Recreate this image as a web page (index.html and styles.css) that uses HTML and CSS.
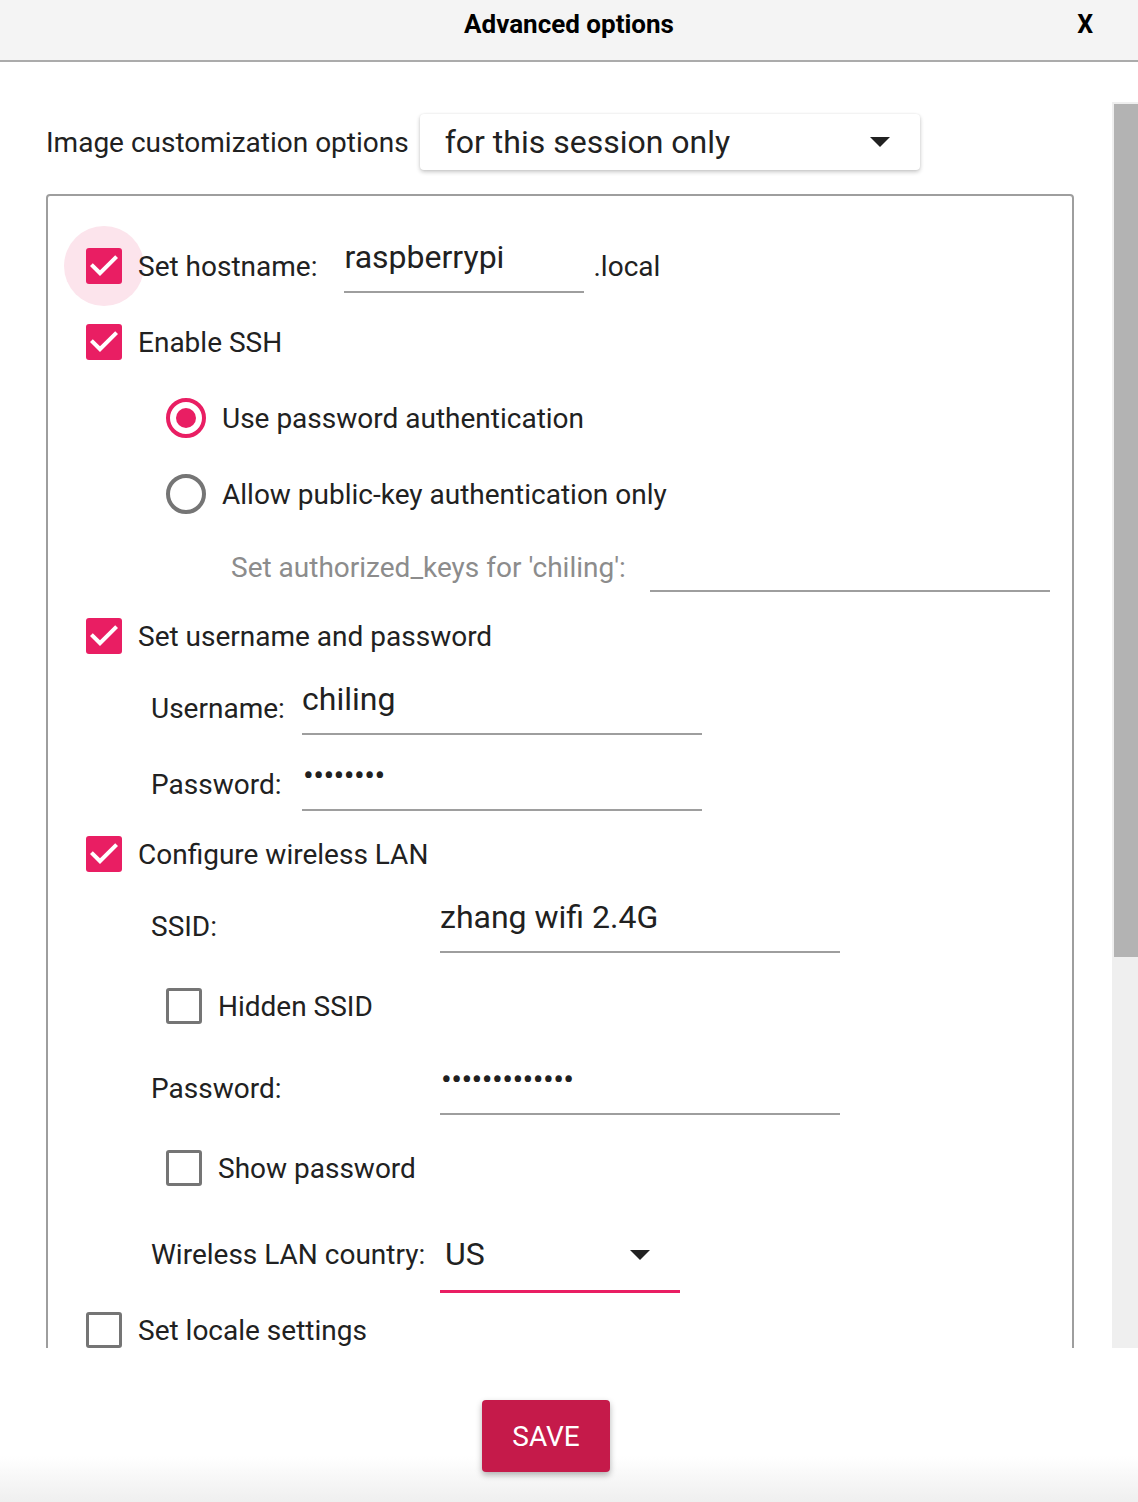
FILE: index.html
```html
<!DOCTYPE html>
<html lang="en">
<head>
<meta charset="utf-8">
<title>Advanced options</title>
<link rel="stylesheet" href="styles.css">
</head>
<body>
<header class="titlebar">
  <div class="spacer"></div>
  <h1 class="title">Advanced options</h1>
  <div class="close">X</div>
</header>

<div class="scroll-area">
  <main class="content">
    <div class="scope-row">
      <span class="label">Image customization options</span>
      <div class="select-box">
        <span class="select-text">for this session only</span>
        <span class="arrow"></span>
      </div>
    </div>

    <section class="group">
      <div class="row h76">
        <span class="halo">
          <span class="cb checked"><svg viewBox="0 0 36 36"><polygon points="14,28 4,18 6.8,15.2 14,22.3 29.2,7.2 32,10"/></svg></span>
        </span>
        <span class="label cb-label">Set hostname:</span>
        <div class="field w240 host">raspberrypi</div>
        <span class="label suffix">.local</span>
      </div>

      <div class="row h76">
        <span class="cb checked"><svg viewBox="0 0 36 36"><polygon points="14,28 4,18 6.8,15.2 14,22.3 29.2,7.2 32,10"/></svg></span>
        <span class="label cb-label">Enable SSH</span>
      </div>

      <div class="row h76 indent-radio">
        <span class="radio on"></span>
        <span class="label cb-label">Use password authentication</span>
      </div>

      <div class="row h76 indent-radio">
        <span class="radio"></span>
        <span class="label cb-label">Allow public-key authentication only</span>
      </div>

      <div class="row h70 indent-keys">
        <span class="label muted">Set authorized_keys for 'chiling':</span>
        <div class="field w400 keys"></div>
      </div>

      <div class="row h68">
        <span class="cb checked"><svg viewBox="0 0 36 36"><polygon points="14,28 4,18 6.8,15.2 14,22.3 29.2,7.2 32,10"/></svg></span>
        <span class="label cb-label">Set username and password</span>
      </div>

      <div class="row h76 indent-label">
        <span class="label col-user">Username:</span>
        <div class="field w400">chiling</div>
      </div>

      <div class="row h76 indent-label">
        <span class="label col-user">Password:</span>
        <div class="field w400 dots">••••••••</div>
      </div>

      <div class="row h64">
        <span class="cb checked"><svg viewBox="0 0 36 36"><polygon points="14,28 4,18 6.8,15.2 14,22.3 29.2,7.2 32,10"/></svg></span>
        <span class="label cb-label">Configure wireless LAN</span>
      </div>

      <div class="row h80 indent-label">
        <span class="label col-wifi">SSID:</span>
        <div class="field w400">zhang wifi 2.4G</div>
      </div>

      <div class="row h80 indent-radio">
        <span class="cb"></span>
        <span class="label cb-label">Hidden SSID</span>
      </div>

      <div class="row h84 indent-label">
        <span class="label col-wifi">Password:</span>
        <div class="field w400 dots">•••••••••••••</div>
      </div>

      <div class="row h76 indent-radio">
        <span class="cb"></span>
        <span class="label cb-label">Show password</span>
      </div>

      <div class="row h96 indent-label">
        <span class="label col-wifi">Wireless LAN country:</span>
        <div class="field w240 country">
          <span class="country-text">US</span>
          <span class="arrow"></span>
        </div>
      </div>

      <div class="row h56">
        <span class="cb"></span>
        <span class="label cb-label">Set locale settings</span>
      </div>
    </section>
  </main>

  <div class="scrollbar">
    <div class="track"><div class="thumb"></div></div>
  </div>
</div>

<footer class="actions">
  <button class="save" type="button">SAVE</button>
</footer>
</body>
</html>
```

FILE: styles.css
```css
* { box-sizing: border-box; }

html, body {
  margin: 0;
  padding: 0;
  background: #ffffff;
}

body {
  width: 1138px;
  height: 1502px;
  overflow: hidden;
  font-family: Roboto, "Liberation Sans", sans-serif;
  color: #212121;
}

/* ---------- title bar ---------- */
.titlebar {
  height: 62px;
  background: #f4f4f4;
  border-bottom: 2px solid #ababab;
  display: grid;
  grid-template-columns: 1fr auto 1fr;
  align-items: start;
  padding: 10px 45px 0 45px;
}

.title {
  margin: 0;
  font-size: 26px;
  font-weight: 700;
  line-height: 29px;
  color: #000;
}

.close {
  justify-self: end;
  font-size: 25px;
  font-weight: 700;
  line-height: 29px;
  color: #000;
}

/* ---------- scroll area ---------- */
.scroll-area {
  display: flex;
  height: 1286px;
}

.content {
  flex: 1;
  overflow: hidden;
  padding: 52px 38px 0 46px;
}

.scrollbar {
  width: 26px;
  padding-top: 40px;
  display: flex;
}

.track {
  flex: 1;
  background: #efefef;
  padding: 2px 0 0 2px;
}

.thumb {
  height: 853px;
  background: #b3b3b3;
}

/* ---------- text ---------- */
.label {
  font-size: 28px;
  line-height: 33px;
  white-space: nowrap;
}

.muted {
  color: #8c8c8c;
}

/* ---------- top selector ---------- */
.scope-row {
  display: flex;
  align-items: center;
  height: 56px;
  gap: 11px;
}

.select-box {
  width: 500px;
  height: 56px;
  background: #fff;
  border-radius: 4px;
  box-shadow: 0 2px 4px rgba(0, 0, 0, 0.22), 0 0 2px rgba(0, 0, 0, 0.08);
  display: flex;
  align-items: center;
  padding: 0 30px 0 25px;
}

.select-text {
  font-size: 32px;
  line-height: 36px;
}

.arrow {
  margin-left: auto;
  width: 0;
  height: 0;
  border-left: 10px solid transparent;
  border-right: 10px solid transparent;
  border-top: 10px solid #212121;
}

/* ---------- group box ---------- */
.group {
  margin-top: 24px;
  border: 2px solid #9e9e9e;
  border-radius: 4px;
  padding: 32px 0 80px 38px;
}

.row {
  display: flex;
  align-items: center;
}

.h56 { height: 56px; }
.h64 { height: 64px; }
.h68 { height: 68px; }
.h70 { height: 70px; }
.h76 { height: 76px; }
.h80 { height: 80px; }
.h84 { height: 84px; }
.h96 { height: 96px; }

.indent-radio { padding-left: 80px; }
.indent-label { padding-left: 65px; }
.indent-keys { padding-left: 145px; }

.cb-label { margin-left: 16px; }

.col-user { width: 151px; }
.col-wifi { width: 289px; }

/* ---------- checkbox ---------- */
.halo {
  flex: none;
  width: 80px;
  height: 80px;
  margin: -22px;
  border-radius: 50%;
  background: #fce4ec;
  display: flex;
  align-items: center;
  justify-content: center;
}

.cb {
  flex: none;
  width: 36px;
  height: 36px;
  border-radius: 3px;
  border: 3px solid #757575;
}

.cb.checked {
  border: none;
  background: #e91e63;
}

.cb svg {
  display: block;
  width: 36px;
  height: 36px;
  fill: #fff;
}

/* ---------- radio ---------- */
.radio {
  flex: none;
  width: 40px;
  height: 40px;
  border-radius: 50%;
  border: 4px solid #757575;
  display: flex;
  align-items: center;
  justify-content: center;
}

.radio.on {
  border-color: #e91e63;
}

.radio.on::after {
  content: "";
  width: 20px;
  height: 20px;
  border-radius: 50%;
  background: #e91e63;
}

/* ---------- text fields ---------- */
.field {
  flex: none;
  height: 54px;
  border-bottom: 2px solid #9e9e9e;
  font-size: 32px;
  line-height: 36px;
  white-space: nowrap;
}

.w240 { width: 240px; }
.w400 { width: 400px; }

.host { margin-left: 27px; }
.suffix { margin-left: 9px; }
.keys { margin-left: 24px; height: 50px; }

.dots {
  letter-spacing: -0.6px;
  padding-left: 1px;
}

.country {
  height: 57px;
  margin-top: 21px;
  border-bottom: 3px solid #e91e63;
  display: flex;
  align-items: flex-start;
  padding: 0 30px 0 5px;
}

.country .arrow {
  margin-top: 14px;
}

/* ---------- footer ---------- */
.actions {
  height: 154px;
  display: flex;
  justify-content: center;
  align-items: flex-start;
  padding: 52px 46px 0 0;
  background: linear-gradient(to bottom, #ffffff 0, #ffffff 70%, #efefef 100%);
}

.save {
  width: 128px;
  height: 72px;
  border: none;
  border-radius: 4px;
  background: #c51a4a;
  color: #fff;
  font-family: Roboto, "Liberation Sans", sans-serif;
  font-size: 28px;
  box-shadow: 0 3px 6px rgba(0, 0, 0, 0.3);
  padding: 0;
}
```
